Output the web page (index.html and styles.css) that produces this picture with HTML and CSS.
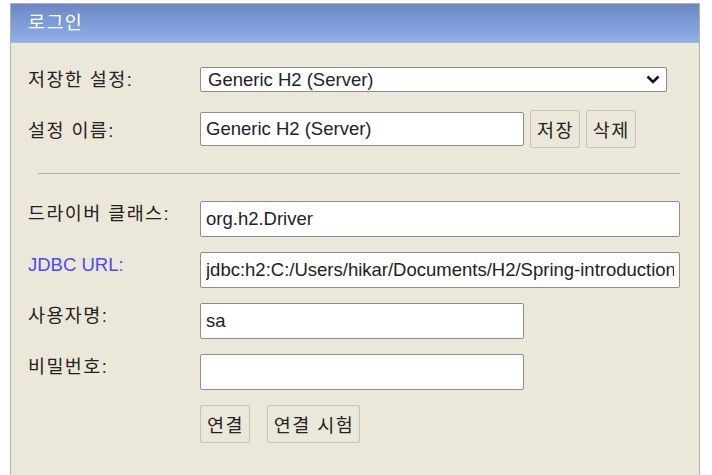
FILE: index.html
```html
<!DOCTYPE html>
<html lang="ko">
  <head>
    <meta charset="UTF-8" />
    <title>H2 Console</title>
    <link rel="stylesheet" href="styles.css">
  </head>
  <body>
    <div class="login">
      <div class="login-title ko">로그인</div>
      <form class="login-body">
        <div class="row">
          <label class="label ko" for="setting">저장한 설정:</label>
          <div class="select-wrap">
            <select id="setting" class="select">
              <option>Generic H2 (Server)</option>
            </select>
            <svg class="chevron" width="14" height="9" viewBox="0 0 14 9">
              <path d="M1.5 1.5 L7 7 L12.5 1.5" fill="none" stroke="#111" stroke-width="2.6" />
            </svg>
          </div>
        </div>
        <div class="row">
          <label class="label ko" for="name">설정 이름:</label>
          <input id="name" class="field short" type="text" value="Generic H2 (Server)" />
          <button type="button" class="btn ko first">저장</button>
          <button type="button" class="btn ko">삭제</button>
        </div>

        <hr class="divider" />

        <div class="row">
          <label class="label ko" for="driver">드라이버 클래스:</label>
          <input id="driver" class="field wide" type="text" value="org.h2.Driver" />
        </div>
        <div class="row">
          <label class="label link" for="url">JDBC URL:</label>
          <input id="url" class="field wide" type="text" value="jdbc:h2:C:/Users/hikar/Documents/H2/Spring-introduction" />
        </div>
        <div class="row">
          <label class="label ko" for="user">사용자명:</label>
          <input id="user" class="field short" type="text" value="sa" />
        </div>
        <div class="row">
          <label class="label ko" for="password">비밀번호:</label>
          <input id="password" class="field short" type="password" />
        </div>
        <div class="row actions">
          <button type="button" class="btn ko">연결</button>
          <button type="button" class="btn ko">연결 시험</button>
        </div>
      </form>
    </div>
  </body>
</html>
```

FILE: styles.css
```css
body {
  margin: 3px 0 0 10px;
  font-family: "Liberation Sans", "Noto Sans CJK KR", sans-serif;
  font-size: 18.5px;
  color: #222;
  background-color: #fff;
}
.ko {
  letter-spacing: 1.4px;
}
.login {
  box-sizing: border-box;
  width: 690px;
  height: 480px;
  border: 1px solid #b4b2a8;
  background-color: #ebe8da;
}
.login-title {
  height: 38px;
  line-height: 38px;
  padding-left: 17px;
  color: #fff;
  background: linear-gradient(to bottom, #6c88c3, #8fafea);
  border-bottom: 1px solid #a9b6cf;
}
.login-body {
  padding: 24px 19px 0 17px;
}
.row {
  display: flex;
  align-items: flex-start;
  margin-bottom: 15px;
}
.label {
  width: 172px;
  flex-shrink: 0;
  padding-top: 3px;
  line-height: 20px;
}
.link {
  color: #4b4bf5;
}
.select-wrap {
  position: relative;
  width: 467px;
  height: 25px;
}
.select {
  box-sizing: border-box;
  width: 100%;
  height: 25px;
  margin: 0;
  padding: 0 0 0 7px;
  font: inherit;
  font-size: 18.5px;
  color: #222;
  background-color: #fff;
  border: 1px solid #8a8a8a;
  border-radius: 2px;
  appearance: none;
}
.chevron {
  position: absolute;
  top: 8px;
  right: 7px;
  pointer-events: none;
}
.field {
  box-sizing: border-box;
  height: 36px;
  margin: 0;
  padding: 0 5px;
  font: inherit;
  color: #222;
  background-color: #fff;
  border: 1px solid #8d8d8d;
  border-radius: 2px;
}
.wide {
  width: 480px;
}
.short {
  width: 324px;
}
.row .short + .btn {
  margin-left: 6px;
}
.row:nth-child(2) {
  margin-top: 18px;
  align-items: center;
}
.row:nth-child(2) .field {
  height: 34px;
}
.btn {
  box-sizing: border-box;
  height: 38px;
  margin: 0 6px 0 0;
  padding: 0 5px 0 6px;
  font: inherit;
  color: #222;
  background-color: #ebe8da;
  border: 1px solid #c5c3ba;
  border-radius: 2px;
}
.divider {
  margin: 25px 0 27px 10px;
  border: 0;
  border-top: 1px solid #b2b0a6;
}
.actions {
  padding-left: 172px;
}
.actions .btn {
  margin-right: 17px;
}
```
